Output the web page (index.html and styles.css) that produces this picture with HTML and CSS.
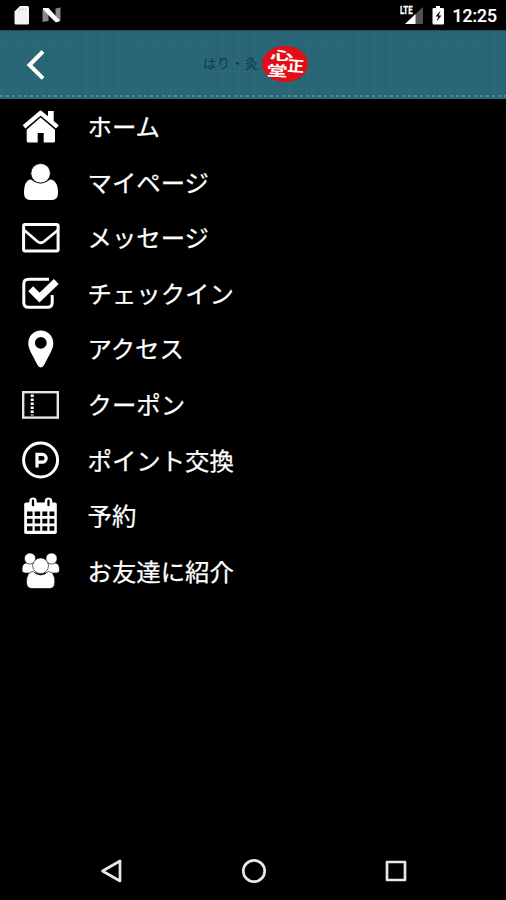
FILE: index.html
```html
<!DOCTYPE html>
<html lang="ja">
<head>
<meta charset="utf-8">
<title>メニュー</title>
<link rel="stylesheet" href="styles.css">
</head>
<body>
<div class="screen">
  <div class="status">
    <svg class="status-left" viewBox="0 0 60 30" width="60" height="30">
      <path fill="#f4f4f4" d="M6 6H13.500Q15 6 15 7.500V23Q15 24.500 13.500 24.500H2Q.500 24.500 .500 23V11.500Z"/>
      <path stroke="#bbb" stroke-width="1" d="M6 8.500v2M8.800 8.500v2M11.600 8.500v2"/>
      <path fill="#888" d="M28.500 9.500l6 4V21l-6 1ZM41.500 8.500l5-1V21l-5-3Z"/>
      <path fill="#fff" d="M29 8h5.500L46 20.500Q45 22.500 41.500 22.200L29 9.500Z"/>
    </svg>
    <svg class="status-icons" viewBox="0 0 50 30" width="50" height="30">
      <path fill="#505050" d="M23 7V24H5Z"/>
      <path fill="#fff" d="M15.500 14V24H5Z"/>
      <path fill="#000" d="M0 5h13v10H0Z"/>
      <text class="lte" x="0" y="14.200" textLength="12.500" lengthAdjust="spacingAndGlyphs">LTE</text>
      <path fill="#fff" d="M36 6h4v2h2.500Q44 8 44 9v14.500Q44 24.500 43 24.500h-9Q32.500 24.500 32.500 23.500V9Q32.500 8 33.500 8h2.500Z"/>
      <path fill="#111" d="M40.500 10.500l-5 6h2.700L36.500 21.500l5-6h-2.700Z"/>
    </svg>
    <span class="clock">12:25</span>
  </div>
  <header class="header">
    <svg class="back" viewBox="0 0 24 34" width="24" height="34"><path d="M20 4.500L6.500 18L20 31.300" fill="none" stroke="#fff" stroke-width="4"/></svg>
    <div class="brand">
      <span class="tagline">はり・灸</span>
      <svg class="seal" viewBox="0 0 46 36" width="46" height="36">
        <ellipse cx="23" cy="18" rx="23" ry="18" fill="#e30d17"/>
        <text transform="translate(8 14.500) rotate(-2) scale(1.800 .95)" font-size="13">心</text>
        <text transform="translate(25 25) rotate(4) scale(1.050 .95)" font-size="16">正</text>
        <text transform="translate(4.500 29.500) rotate(3) scale(1.300 .9)" font-size="16">堂</text>
      </svg>
    </div>
  </header>
  <nav class="menu">
    <a class="item"><svg class="icon" viewBox="0 0 40 40">
      <path fill="#fff" d="M20.600 10L35 22.500V34Q35 35.600 33.500 35.600H23.700V26H17.700V35.600H8.200Q6.700 35.600 6.700 34V22.500Z"/>
      <path fill="none" stroke="#000" stroke-width="6" d="M4 20.700L20.600 6.500L37.500 20.700"/>
      <path fill="none" stroke="#fff" stroke-width="4.300" stroke-linejoin="round" d="M4 19.800L20.600 5.800L37.400 19.800"/>
      <path fill="#fff" d="M28 4h5.700v12L28 11Z"/>
    </svg><span>ホーム</span></a>
    <a class="item"><svg class="icon" viewBox="0 0 40 40">
      <path fill="#fff" d="M11 17.500Q20.500 25 30 17.500Q38 18 38 31Q38 38 32 38H10Q4 38 4 31Q4 18 11 17.500Z"/>
      <circle cx="20.600" cy="11.300" r="9.800" fill="#fff" stroke="#000" stroke-width=".8"/>
    </svg><span>マイページ</span></a>
    <a class="item"><svg class="icon" viewBox="0 0 40 40">
      <rect x="3.600" y="6.500" width="34.500" height="26.500" rx="1.500" fill="none" stroke="#fff" stroke-width="3"/>
      <path fill="none" stroke="#fff" stroke-width="2.800" d="M4 12L17.500 23.500Q20.800 26 24 23.500L38 12"/>
    </svg><span>メッセージ</span></a>
    <a class="item"><svg class="icon" viewBox="0 0 40 40">
      <path fill="none" stroke="#fff" stroke-width="3" d="M29 6.200H8.500Q3.800 6.200 3.800 11V29.500Q3.800 34.300 8.500 34.300H27.500Q32.200 34.300 32.200 29.500V22"/>
      <path fill="none" stroke="#fff" stroke-width="7" d="M10.700 15.800L19.500 24.500L36.300 8.500"/>
    </svg><span>チェックイン</span></a>
    <a class="item"><svg class="icon" viewBox="0 0 40 40">
      <path fill="#fff" fill-rule="evenodd" d="M20.800 1.500C13.500 1.500 8.300 7 8.300 14.500C8.300 20 12 25 17.500 36Q20.800 41 24.100 36C29.600 25 33.300 20 33.300 14.500C33.300 7 28 1.500 20.800 1.500ZM20.800 8A5.900 5.900 0 1 1 20.800 19.800A5.900 5.900 0 1 1 20.800 8Z"/>
    </svg><span>アクセス</span></a>
    <a class="item"><svg class="icon" viewBox="0 0 40 40">
      <rect x="3.200" y="7.200" width="34.600" height="25.400" fill="none" stroke="#e4e4e4" stroke-width="2.400"/>
      <path stroke="#fff" stroke-width="3" stroke-dasharray="2.400 1.600" d="M12.200 9.500v21"/>
    </svg><span>クーポン</span></a>
    <a class="item"><svg class="icon" viewBox="0 0 40 40">
      <circle cx="20.600" cy="20" r="17" fill="none" stroke="#fff" stroke-width="3"/>
      <path fill="none" stroke="#fff" stroke-width="3.200" d="M17 27.500V14.400H22.300A3.900 3.900 0 0 1 22.300 22.200H17"/>
    </svg><span>ポイント交換</span></a>
    <a class="item"><svg class="icon" viewBox="0 0 40 40">
      <path fill="#fff" d="M6 6.500H35Q36.800 6.500 36.800 8.300V36.200Q36.800 38 35 38H6Q4.200 38 4.200 36.200V8.300Q4.200 6.500 6 6.500Z"/>
      <path fill="#000" d="M7 15.500h5.500v4.500H7zM14.700 15.500h5.500v4.500h-5.500zM22.300 15.500h5v4.500h-5zM29.500 15.500h4.800v4.500h-4.800zM7 22.800h5.500v4.700H7zM14.700 22.800h5.500v4.700h-5.500zM22.300 22.800h5v4.700h-5zM29.500 22.800h4.800v4.700h-4.800zM7 30.300h5.500v4.500H7zM14.700 30.300h5.500v4.500h-5.500zM22.300 30.300h5v4.500h-5zM29.500 30.300h4.800v4.500h-4.800z"/>
      <path stroke="#fff" stroke-width="7.500" stroke-linecap="round" d="M13 5.200v3M28.500 5.200v3"/>
      <path stroke="#000" stroke-width="2.300" stroke-linecap="round" d="M13 4.700v4.500M28.500 4.700v4.500"/>
    </svg><span>予約</span></a>
    <a class="item"><svg class="icon" viewBox="0 0 40 40">
      <g fill="#fff" stroke="#000" stroke-width=".6">
        <path d="M6 12H14L17 22H5Q2 22 2 19Q2 12.500 6 12ZM35.500 12H27.500L24.500 22H36.500Q39.500 22 39.500 19Q39.500 12.500 35.500 12Z"/>
        <circle cx="10" cy="7.500" r="5.600"/><circle cx="31.500" cy="7.500" r="5.600"/>
        <path d="M13 20.500Q20.600 27.500 28.500 20.500Q34.800 21 34.800 31Q34.800 37.500 29.500 37.500H12Q6.500 37.500 6.500 31Q6.500 21 13 20.500Z"/>
        <circle cx="20.600" cy="14.800" r="7.900"/>
      </g>
    </svg><span>お友達に紹介</span></a>
  </nav>
  <footer class="navbar">
    <svg viewBox="0 0 24 26" width="24" height="26"><path d="M21 3V23L3.500 13Z"/></svg>
    <svg viewBox="0 0 26 26" width="26" height="26"><circle cx="13" cy="13" r="10.700"/></svg>
    <svg viewBox="0 0 24 24" width="24" height="24"><rect x="3" y="3" width="18" height="18"/></svg>
  </footer>
</div>
</body>
</html>
```
FILE: styles.css
```css
* { box-sizing: border-box; }
body { margin: 0; background: #000; }
svg { display: block; flex: none; }
.screen {
  width: 506px;
  height: 900px;
  display: flex;
  flex-direction: column;
  background: #000;
  color: #fff;
  overflow: hidden;
  font-family: "Noto Sans CJK JP", sans-serif;
}
.status {
  height: 30px;
  flex: none;
  display: flex;
  align-items: center;
  padding: 0 9px 0 14px;
}
.status-left { margin-right: auto; }
.status-icons { margin-right: 3px; }
.lte { font: 700 10.500px Roboto, sans-serif; fill: #fff; stroke: #fff; stroke-width: .3px; }
.clock {
  font: 500 17.5px/30px Roboto, sans-serif;
  padding-top: 2px;
  -webkit-text-stroke: .2px #fff;
}
.header {
  height: 69px;
  flex: none;
  display: grid;
  grid-template-columns: 177px 1fr;
  align-items: start;
  padding: 16px 0 0 26px;
  background:
    repeating-linear-gradient(90deg, #7aa4ac80 0 3px, transparent 3px 6px) 0 65px / 100% 2px no-repeat,
    linear-gradient(#1d4b58, #1d4b58) 0 0 / 100% 1px no-repeat,
    repeating-linear-gradient(90deg, #ffffff04 0 2px, transparent 2px 11px, #00000005 11px 13px, transparent 13px 17px),
    repeating-linear-gradient(0deg, #ffffff04 0 1px, transparent 1px 5px, #00000005 5px 6px, transparent 6px 9px),
    #296676;
}
.back { margin-top: 1px; margin-left: -3px; }
.brand { display: flex; align-items: center; height: 36px; }
.tagline {
  width: 59px;
  font-size: 13px;
  line-height: 36px;
  letter-spacing: 1px;
  margin-top: -3px;
  color: #12394a;
  white-space: nowrap;
}
.seal { overflow: visible; }
.seal text { fill: #fff; font-weight: 700; }
.menu { flex: 1; }
.item {
  height: 55.55px;
  display: flex;
  align-items: center;
  padding-left: 20px;
  font-size: 24.4px;
  line-height: 36px;
}
.item span { margin-top: -1px; -webkit-text-stroke: .25px #fff; }
.icon { width: 40px; height: 40px; margin-right: 27.500px; }
.navbar {
  height: 58px;
  flex: none;
  display: flex;
  align-items: center;
  justify-content: space-between;
  padding: 0 98px 0 99px;
}
.navbar svg { fill: none; stroke: #e8e8e8; stroke-width: 2.700; stroke-linejoin: round; }
```
